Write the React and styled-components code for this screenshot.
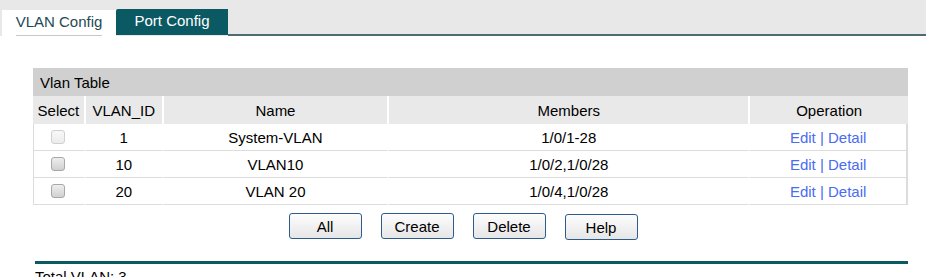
import React from "react";
import styled, { createGlobalStyle } from "styled-components";

const Global = createGlobalStyle`
  html, body { margin: 0; padding: 0; background: #fff; }
  body { font-family: "Liberation Sans", Arial, sans-serif; font-size: 15px; color: #000; }
`;

const TEAL = "#0b5a63";

const TabBar = styled.div`
  display: flex;
  align-items: flex-end;
  height: 36px;
  background: #e8e8e8;
  padding-left: 2px;
`;

const Tab = styled.div`
  box-sizing: border-box;
  display: flex;
  align-items: flex-end;
  justify-content: center;
  height: 26px;
  margin-bottom: ${(p) => (p.$active ? "0" : "1px")};
  width: ${(p) => (p.$active ? "114px" : "112px")};
  background: ${(p) => (p.$active ? "#fff" : TEAL)};
  color: ${(p) => (p.$active ? "#1d4a55" : "#fff")};
  border-top-left-radius: ${(p) => (p.$active ? "0" : "2px")};
  font-size: 15px;
`;

const TabLabel = styled.span`
  line-height: 20px;
  border-bottom: ${(p) => (p.$active ? "1px solid #c8c8c8" : "none")};
  padding: ${(p) => (p.$active ? "0 0 3px" : "0 0 4px")};
`;

const BarLine = styled.div`
  flex: 1;
  height: 2px;
  background: #4e6a72;
`;

const Content = styled.div`
  padding: 32px 18px 0 33px;
`;

const Table = styled.table`
  width: 875px;
  border-collapse: separate;
  border-spacing: 0;
  font-size: 15px;
`;

const Title = styled.td`
  background: #d0d0d0;
  height: 28px;
  padding: 0 0 0 7px;
  text-align: left;
`;

const Head = styled.th`
  background: #e9e9e9;
  height: 28px;
  padding: 0;
  font-weight: normal;
  text-align: center;
  width: ${(p) => p.$w}px;
  border-left: ${(p) => (p.$first ? "none" : "2px solid #fff")};
`;

const Cell = styled.td`
  height: 26px;
  padding: 0;
  text-align: center;
  border-bottom: 1px solid #dcdcdc;
  border-left: ${(p) => (p.$first ? "1px solid #dcdcdc" : "2px solid #fff")};
  border-right: ${(p) => (p.$last ? "2px solid #dcdcdc" : "none")};
`;

const Check = styled.input.attrs({ type: "checkbox" })`
  appearance: none;
  display: block;
  margin: 0 auto 0 17px;
  width: 14px;
  height: 14px;
  box-sizing: border-box;
  border-radius: 3px;
  border: 1px solid ${(p) => (p.disabled ? "#d0d0d0" : "#a8a8a8")};
  background: ${(p) =>
    p.disabled
      ? "linear-gradient(#f8f8f8, #ececec)"
      : "linear-gradient(#eeeeee, #d0d0d0)"};
`;

const Link = styled.a`
  color: #4a6cf0;
  text-decoration: none;
`;

const ButtonRow = styled.div`
  display: flex;
  justify-content: center;
  gap: 19px;
  margin: 8px 0 0 -33px;
  width: 926px;
`;

const Button = styled.button`
  width: 73px;
  height: 26px;
  box-sizing: border-box;
  border: 1px solid #2d5c8c;
  border-radius: 3px;
  background: linear-gradient(#fdfdfd, #e6e6e6);
  font-family: "Liberation Sans", Arial, sans-serif;
  font-size: 15px;
  color: #000;
  padding: 0;
  margin-top: ${(p) => p.$offset || 0}px;
`;

const Rule = styled.div`
  margin: 21px 0 0 2px;
  height: 3px;
  background: ${TEAL};
  width: 873px;
`;

const Total = styled.div`
  margin: 4px 0 0 2px;
  font-size: 15px;
  line-height: 17px;
`;

const cols = [
  { t: "Select", w: 51 },
  { t: "VLAN_ID", w: 76 },
  { t: "Name", w: 226 },
  { t: "Members", w: 363 },
  { t: "Operation", w: 159 },
];

const rows = [
  { id: 1, name: "System-VLAN", members: "1/0/1-28", disabled: true },
  { id: 10, name: "VLAN10", members: "1/0/2,1/0/28" },
  { id: 20, name: "VLAN 20", members: "1/0/4,1/0/28" },
];

export default function App() {
  return (
    <>
      <Global />
      <TabBar>
        <Tab $active>
          <TabLabel $active>VLAN Config</TabLabel>
        </Tab>
        <Tab>
          <TabLabel>Port Config</TabLabel>
        </Tab>
        <BarLine />
      </TabBar>
      <Content>
        <Table>
          <tbody>
            <tr>
              <Title colSpan={5}>Vlan Table</Title>
            </tr>
            <tr>
              {cols.map((c, i) => (
                <Head key={c.t} $w={c.w} $first={i === 0}>
                  {c.t}
                </Head>
              ))}
            </tr>
            {rows.map((r) => (
              <tr key={r.id}>
                <Cell $first>
                  <Check disabled={r.disabled} />
                </Cell>
                <Cell>{r.id}</Cell>
                <Cell>{r.name}</Cell>
                <Cell>{r.members}</Cell>
                <Cell $last>
                  <Link href="#">Edit</Link> <Link href="#">|</Link>{" "}
                  <Link href="#">Detail</Link>
                </Cell>
              </tr>
            ))}
          </tbody>
        </Table>
        <ButtonRow>
          <Button>All</Button>
          <Button>Create</Button>
          <Button>Delete</Button>
          <Button $offset={1}>Help</Button>
        </ButtonRow>
        <Rule />
        <Total>Total VLAN: 3</Total>
      </Content>
    </>
  );
}
